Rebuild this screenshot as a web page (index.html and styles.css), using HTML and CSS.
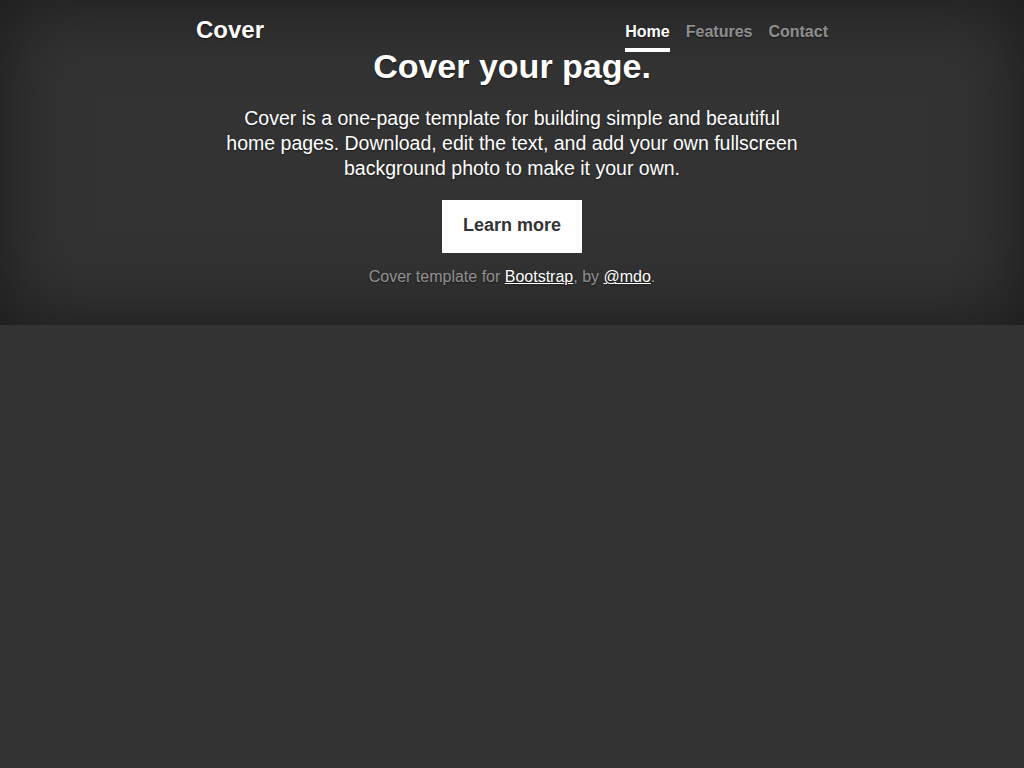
FILE: index.html
```html
<!DOCTYPE html>
<html lang="en">
<head>
<meta charset="utf-8">
<title>Cover Template</title>
<link rel="stylesheet" href="styles.css">
</head>
<body>
<div class="site">
  <div class="container">
    <header class="masthead">
      <h3 class="brand">Cover</h3>
      <nav class="nav">
        <a class="nav-link active" href="#">Home</a>
        <a class="nav-link" href="#">Features</a>
        <a class="nav-link" href="#">Contact</a>
      </nav>
    </header>
    <main class="cover">
      <h1 class="cover-heading">Cover your page.</h1>
      <p class="lead">Cover is a one-page template for building simple and beautiful home pages. Download, edit the text, and add your own fullscreen background photo to make it your own.</p>
      <p class="cta"><a href="#" class="btn">Learn more</a></p>
    </main>
    <footer class="mastfoot">
      <p>Cover template for <a href="#">Bootstrap</a>, by <a href="#">@mdo</a>.</p>
    </footer>
  </div>
</div>
</body>
</html>
```

FILE: styles.css
```css
html, body {
  margin: 0;
  padding: 0;
}

body {
  background: #333;
  color: #fff;
  font-family: "Liberation Sans", Arial, sans-serif;
  text-shadow: 0 0.8px 1.6px rgba(0, 0, 0, 0.5);
}

.site {
  height: 325px;
  box-sizing: border-box;
  padding-top: 16px;
  box-shadow: inset 0 0 80px rgba(0, 0, 0, 0.5);
}

.container {
  width: 632px;
  margin: 0 auto;
  display: flex;
  flex-direction: column;
}

.masthead {
  display: flex;
  justify-content: space-between;
  align-items: flex-start;
  height: 30px;
}

.brand {
  margin: 0;
  font-size: 24px;
  line-height: 28.8px;
  font-weight: bold;
}

.nav {
  display: flex;
  gap: 16px;
}

.nav-link {
  display: block;
  font-size: 16px;
  line-height: 24px;
  font-weight: bold;
  padding: 4px 0;
  border-bottom: 4px solid transparent;
  color: rgba(255, 255, 255, 0.5);
  text-decoration: none;
}

.nav-link.active {
  color: #fff;
  border-bottom-color: #fff;
}

.cover {
  padding: 0 24px;
  text-align: center;
}

.cover-heading {
  margin: 0 0 19.5px;
  font-size: 34px;
  line-height: 40.8px;
  font-weight: bold;
}

.lead {
  margin: 0 0 19px;
  font-size: 19.5px;
  line-height: 25px;
}

.cta {
  margin: 0;
}

.btn {
  display: inline-block;
  padding: 11px 20px 13px;
  font-size: 18px;
  line-height: 27px;
  font-weight: bold;
  color: #333;
  background: #fff;
  border: 1px solid #fff;
  text-shadow: none;
  text-decoration: none;
}

.mastfoot {
  margin-top: 12px;
  text-align: center;
}

.mastfoot p {
  margin: 0;
  font-size: 16px;
  line-height: 24px;
  color: rgba(255, 255, 255, 0.5);
}

.mastfoot a {
  color: #fff;
  text-decoration: underline;
}
```
